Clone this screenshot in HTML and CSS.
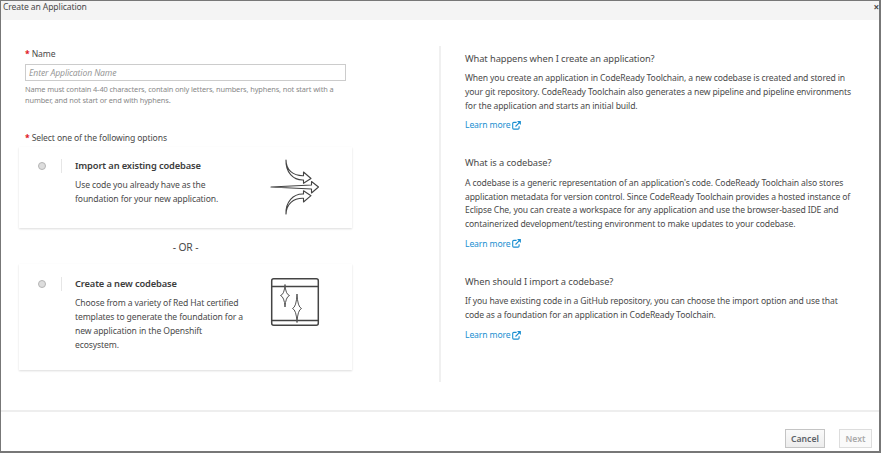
FILE: index.html
```html
<!DOCTYPE html>
<html lang="en">
<head>
<meta charset="utf-8">
<title>Create an Application</title>
<link rel="stylesheet" href="styles.css">
</head>
<body>
<svg class="defs" aria-hidden="true">
  <symbol id="external" viewBox="0 0 9 9">
    <path d="M4.6 1.4H1.8Q.7 1.4.7 2.5V7Q.7 8.1 1.8 8.1H6Q7.1 8.1 7.1 7V5.2M3.5 5.5 7.6 1.4" fill="none" stroke="currentColor" stroke-width="1.1"/>
    <path d="M5 .1H8.9V4Z" fill="currentColor"/>
  </symbol>
</svg>
<div class="modal">
  <header class="header"><span>Create an Application</span><span class="close">×</span></header>
  <main class="content">
    <form class="form">
      <label class="label" for="name"><b class="req">*</b> Name</label>
      <input class="input" id="name" type="text" placeholder="Enter Application Name">
      <p class="help">Name must contain 4-40 characters, contain only letters, numbers, hyphens, not start with a<br>number, and not start or end with hyphens.</p>
      <div class="label options-label"><b class="req">*</b> Select one of the following options</div>
      <section class="card card-import">
        <span class="radio"></span>
        <span class="bar"></span>
        <div class="card-text">
          <h2>Import an existing codebase</h2>
          <p>Use code you already have as the<br>foundation for your new application.</p>
        </div>
        <svg class="art" viewBox="0 0 50 56" fill="none" stroke="#444" stroke-width="1.1" stroke-linejoin="round">
          <path d="M16 1C16 11 23 17 33.5 16.7V13L41 19.5 33.5 24.3V21C23 21.500 15.500 13 16 1Z"/>
          <path d="M1 28 41.500 26V22.500L48.500 28 41.500 34V30Z"/>
          <path d="M16 55C15.500 43 23 34.500 33.500 35V31.700L41 36.700 33.500 43V39.300C23 39 16.500 45 16 55Z"/>
        </svg>
      </section>
      <div class="or">- OR -</div>
      <section class="card card-new">
        <span class="radio"></span>
        <span class="bar"></span>
        <div class="card-text">
          <h2>Create a new codebase</h2>
          <p>Choose from a variety of Red Hat certified<br>templates to generate the foundation for a<br>new application in the Openshift<br>ecosystem.</p>
        </div>
        <svg class="art" viewBox="0 0 50 56" fill="none" stroke="#444" stroke-linejoin="round">
          <rect x="1.700" y="1.700" width="46.600" height="46.600" rx="2" stroke-width="1.500"/>
          <path d="M2 9.500H48M2 43.500H48" stroke-width="1.300"/>
          <path d="M15 7.500Q15.600 17.500 19.500 18.500 15.600 20 15 30 14.400 20 10.500 18.500 14.400 17.500 15 7.500ZM27 17Q27.600 30 31.500 31.500 27.600 33 27 45.500 26.400 33 22.500 31.500 26.400 30 27 17Z" stroke-width="1" stroke="#555"/>
        </svg>
      </section>
    </form>
    <aside class="info">
      <section>
        <h3>What happens when I create an application?</h3>
        <p>When you create an application in CodeReady Toolchain, a new codebase is created and stored in<br>your git repository. CodeReady Toolchain also generates a new pipeline and pipeline environments<br>for the application and starts an initial build.</p>
        <a>Learn more <svg class="ext"><use href="#external"/></svg></a>
      </section>
      <section>
        <h3>What is a codebase?</h3>
        <p>A codebase is a generic representation of an application's code. CodeReady Toolchain also stores<br>application metadata for version control. Since CodeReady Toolchain provides a hosted instance of<br>Eclipse Che, you can create a workspace for any application and use the browser-based IDE and<br>containerized development/testing environment to make updates to your codebase.</p>
        <a>Learn more <svg class="ext"><use href="#external"/></svg></a>
      </section>
      <section>
        <h3>When should I import a codebase?</h3>
        <p>If you have existing code in a GitHub repository, you can choose the import option and use that<br>code as a foundation for an application in CodeReady Toolchain.</p>
        <a>Learn more <svg class="ext"><use href="#external"/></svg></a>
      </section>
    </aside>
  </main>
  <footer class="footer">
    <button class="btn" type="button">Cancel</button>
    <button class="btn btn-disabled" type="button" disabled>Next</button>
  </footer>
</div>
</body>
</html>
```
FILE: styles.css
```css
* { box-sizing: border-box; }
body { margin: 0; font-family: "Noto Sans", sans-serif; font-size: 8.6px; line-height: 13.75px; letter-spacing: -.12px; color: #4a4a4a; background: #fff; }
h2, h3, p { margin: 0; white-space: nowrap; }
.defs { display: none; }
.modal { width: 881px; height: 453px; border: 1px solid #777; border-right-width: 2px; border-bottom-width: 2px; display: flex; flex-direction: column; }
.header { height: 19px; flex: none; background: #f4f4f4; display: flex; justify-content: space-between; padding: 0 0 0 2px; line-height: 13px; }
.close { font-weight: 700; font-size: 10px; line-height: 12px; }
.content { flex: 1; display: flex; align-items: flex-start; padding-left: 18px; }
.form { width: 333px; padding-top: 27px; }
.label { display: block; padding-left: 6px; line-height: 14px; }
.req { color: #e0191f; }
.input { display: block; width: 321px; height: 17px; margin: 3px 0 0 6px; border: 1px solid #ccc; border-radius: 0; padding: 0 3px; font: italic 8.6px "Noto Sans", sans-serif; letter-spacing: -.12px; background: #fff; }
.input::placeholder { color: #999; opacity: 1; }
.help { margin: 3px 0 0 6px; font-size: 7.400px; line-height: 11.400px; color: #888; }
.options-label { margin-top: 24px; }
.card { display: flex; align-items: flex-start; width: 333px; padding: 12px 32px 0 19px; box-shadow: 0 1px 2px rgba(0,0,0,.14); }
.card-import { height: 81px; margin-top: 2px; }
.card-new { height: 106px; }
.radio { width: 8px; height: 8px; margin-top: 3px; border: 1px solid #b5b5b5; border-radius: 50%; background: #ddd; }
.bar { width: 1px; height: 14px; margin: 0 13px 0 15px; background: #e6e6e6; }
.card-text { flex: 1; }
.card h2 { font-size: 9.300px; line-height: 14px; font-weight: 600; color: #3c3c3c; margin-bottom: 6.500px; }
.art { width: 50px; height: 56px; flex: none; }
.card-import .art { margin-top: .5px; }
.card-new h2 { padding-top: 1px; }
.card-new .radio { margin-top: 4px; }
.card-new .bar { margin-top: 1px; }
.card-new .art { margin-top: 1px; }
.or { height: 36px; line-height: 38px; text-align: center; font-size: 10.300px; }
.info { width: 424px; height: 336px; margin: 26px 0 0 87px; border-left: 2px solid #f0f0f0; padding: 5.500px 0 0 24px; }
.info section { margin-bottom: 23.500px; }
.info h3 { font-size: 9.300px; font-weight: 400; line-height: 14px; letter-spacing: -.08px; margin-bottom: 6.500px; }
.info a { display: flex; align-items: center; gap: 1.500px; margin-top: 5.800px; color: #1a8fd1; }
.ext { width: 9px; height: 9px; margin-top: -1px; }
.footer { height: 41px; flex: none; border-top: 2px solid #eee; display: flex; justify-content: flex-end; gap: 14px; padding: 17px 7px 0 0; }
.btn { width: 40px; height: 19px; padding: 0; border: 1px solid #c4c4c4; border-radius: 0; font: 600 8.600px "Noto Sans", sans-serif; color: #5d6268; background: linear-gradient(#fafafa, #ededed); }
.btn-disabled { width: 33px; color: #aaa; border-color: #ddd; background: #fafafa; }
```
